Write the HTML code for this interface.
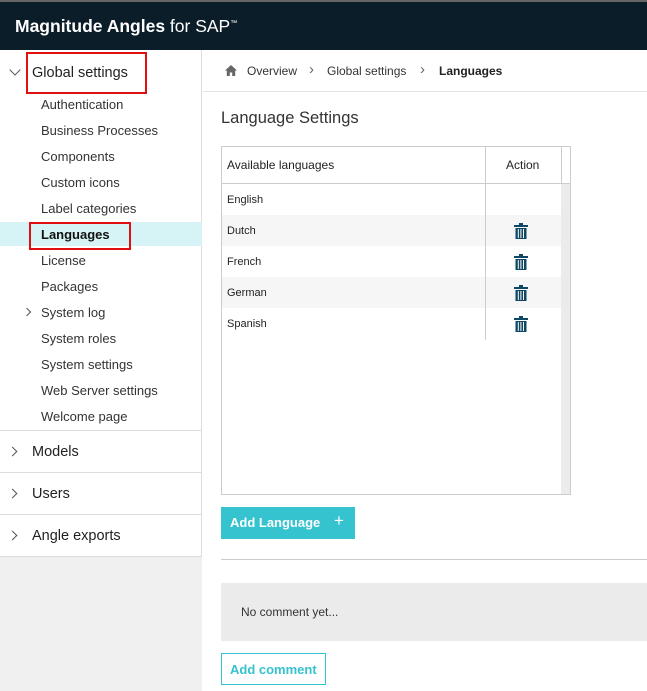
<!DOCTYPE html><html><head><style>
*{margin:0;padding:0;box-sizing:border-box}
body{width:647px;height:691px;overflow:hidden;font-family:"Liberation Sans",Arial,sans-serif;background:#fff;position:relative;color:#222}
.a{position:absolute}
.hdr{left:0;top:0;width:647px;height:50px;background:#0c1d2a;border-top:2px solid #666}
.hdr span{position:absolute;left:15px;top:14px;color:#fff;font-size:17.5px}
.side{left:0;top:50px;width:202px;height:641px;background:#fff;border-right:1px solid #ddd}
.it{position:absolute;left:41px;font-size:13px;color:#333}
.sec{position:absolute;left:0;width:202px;height:42px;border-top:1px solid #ddd;font-size:14.5px;color:#222}
.sec span{position:absolute;left:32px;top:13px}
.chev{position:absolute;left:9px;top:17px;width:7px;height:7px;border-right:1.3px solid #555;border-bottom:1.3px solid #555;transform:rotate(-45deg)}
.row{position:absolute;left:222px;width:339px;height:31px;font-size:11px;padding:10px 0 0 5px}
.trash{position:absolute;left:514px}
.bc{position:absolute;top:61px;font-size:15px;color:#666}
</style></head><body>
<div class="a hdr"><span><b>Magnitude Angles</b> for SAP<sup style="font-size:7px">™</sup></span></div>
<div class="a side">
 <div style="position:absolute;left:11px;top:16px;width:8px;height:8px;border-right:1.3px solid #555;border-bottom:1.3px solid #555;transform:rotate(45deg)"></div>
 <div style="position:absolute;left:32px;top:15px;font-size:14.5px">Global settings</div>
 <div style="position:absolute;left:26px;top:2px;width:121px;height:42px;border:2.5px solid #e01010"></div>
 <div style="position:absolute;left:0;top:172px;width:202px;height:24px;background:#d6f3f5"></div>
 <div style="position:absolute;left:29px;top:172px;width:102px;height:28px;border:2.5px solid #e01010"></div>
 <div class="it" style="top:47px">Authentication</div>
 <div class="it" style="top:73px">Business Processes</div>
 <div class="it" style="top:99px">Components</div>
 <div class="it" style="top:125px">Custom icons</div>
 <div class="it" style="top:151px">Label categories</div>
 <div class="it" style="top:177px;color:#111;font-weight:bold">Languages</div>
 <div class="it" style="top:203px">License</div>
 <div class="it" style="top:229px">Packages</div>
 <div style="position:absolute;left:24px;top:259px;width:6px;height:6px;border-right:1.2px solid #555;border-bottom:1.2px solid #555;transform:rotate(-45deg)"></div>
 <div class="it" style="top:255px">System log</div>
 <div class="it" style="top:281px">System roles</div>
 <div class="it" style="top:307px">System settings</div>
 <div class="it" style="top:333px">Web Server settings</div>
 <div class="it" style="top:359px">Welcome page</div>
 <div class="sec" style="top:380px"><i class="chev"></i><span>Models</span></div>
 <div class="sec" style="top:422px"><i class="chev"></i><span>Users</span></div>
 <div class="sec" style="top:464px"><i class="chev"></i><span>Angle exports</span></div>
 <div style="position:absolute;left:0;top:506px;width:202px;height:135px;background:#f0f0f0;border-top:1px solid #ddd"></div>
</div>
<div class="a" style="left:203px;top:91px;width:444px;height:1px;background:#e3e3e3"></div>
<svg class="a" style="left:225px;top:65px" width="12" height="11" viewBox="0 0 12 11"><path d="M6 0L0 5.5h1.8V11h3V7.5h2.4V11h3V5.5H12z" fill="#666"/></svg>
<div class="a" style="left:247px;top:64px;font-size:12px;color:#333">Overview</div>
<div class="bc" style="left:309px">›</div>
<div class="a" style="left:327px;top:64px;font-size:12px;color:#333">Global settings</div>
<div class="bc" style="left:420px">›</div>
<div class="a" style="left:439px;top:64px;font-size:12px;color:#222;font-weight:bold">Languages</div>
<div class="a" style="left:221px;top:109px;font-size:16.5px;color:#333">Language Settings</div>
<div class="a" style="left:221px;top:146px;width:350px;height:349px;border:1px solid #ccc"></div>
<div class="a" style="left:222px;top:183px;width:348px;height:1px;background:#ccc"></div>
<div class="a" style="left:561px;top:147px;width:1px;height:36px;background:#ccc"></div>
<div class="a" style="left:561px;top:184px;width:9px;height:310px;background:#ebebeb"></div>
<div class="a" style="left:227px;top:158px;font-size:12px">Available languages</div>
<div class="a" style="left:506px;top:158px;font-size:12px">Action</div>
<div class="row" style="top:184px">English</div>
<div class="row" style="top:215px;background:#f6f6f6">Dutch</div>
<div class="row" style="top:246px">French</div>
<div class="row" style="top:277px;background:#f6f6f6">German</div>
<div class="row" style="top:308px">Spanish</div>
<div class="a" style="left:485px;top:147px;width:1px;height:193px;background:#ccc"></div>
<svg width="0" height="0" style="position:absolute"><defs><g id="t"><rect x="0" y="2" width="14" height="2" fill="#0f4864"/><rect x="5" y="0" width="4" height="2" fill="#0f4864"/><path d="M1.5 5h11v11h-11z" fill="#0f4864"/><path d="M4.3 6v9M6.9 6v9M9.5 6v9" stroke="#fff" stroke-width="1"/></g></defs></svg>
<svg class="trash" style="top:223px" width="14" height="16"><use href="#t"/></svg>
<svg class="trash" style="top:254px" width="14" height="16"><use href="#t"/></svg>
<svg class="trash" style="top:285px" width="14" height="16"><use href="#t"/></svg>
<svg class="trash" style="top:316px" width="14" height="16"><use href="#t"/></svg>
<div class="a" style="left:221px;top:507px;width:134px;height:32px;background:#35c3cf;color:#fff;font-size:13px;font-weight:bold;padding:8px 0 0 9px">Add Language <span style="position:absolute;left:113px;top:4px;font-size:17px;font-weight:normal">+</span></div>
<div class="a" style="left:221px;top:559px;width:426px;height:1px;background:#ccc"></div>
<div class="a" style="left:221px;top:583px;width:426px;height:58px;background:#ebebeb;font-size:12px;color:#333;padding:22px 0 0 20px">No comment yet...</div>
<div class="a" style="left:221px;top:653px;width:105px;height:32px;border:1px solid #35c3cf;color:#35c3cf;font-size:13px;font-weight:bold;padding:8px 0 0 8px">Add comment</div>
</body></html>
